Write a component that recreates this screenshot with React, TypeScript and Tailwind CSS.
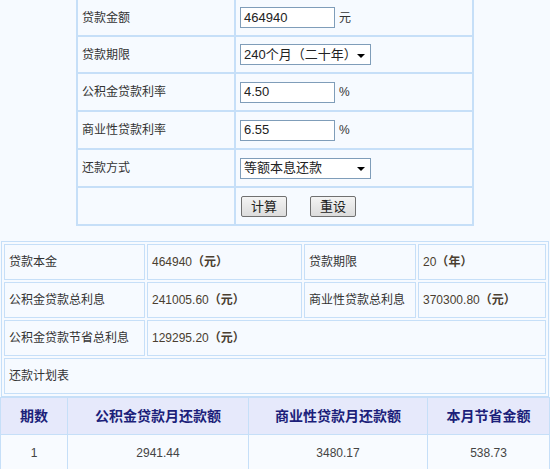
import { ReactNode } from "react";

const font = { fontFamily: '"Liberation Sans", "Noto Sans CJK SC", sans-serif' };

function Input({ value, unit }: { value: string; unit: string }) {
  return (
    <div className="flex items-center gap-[4px]">
      <div className="w-[95px] h-[21px] border border-[#7f9db9] bg-white flex items-center px-[3px] text-[13px] text-[#222]">
        {value}
      </div>
      <span className="text-[12px] text-[#333]">{unit}</span>
    </div>
  );
}

function Select({ value }: { value: string }) {
  return (
    <div className="w-[131px] h-[21px] border border-[#7f9db9] bg-white flex items-center justify-between pl-[3px] pr-[5px] text-[13px] text-[#222]">
      <span>{value}</span>
      <span className="w-0 h-0 border-l-[4px] border-r-[4px] border-t-[4px] border-l-transparent border-r-transparent border-t-black mt-[2px]" />
    </div>
  );
}

function Button({ children }: { children: ReactNode }) {
  return (
    <button className="w-[46px] h-[21px] border border-[#707070] rounded-[2px] bg-gradient-to-b from-[#f4f4f4] to-[#dcdcdc] text-[13px] text-[#222] leading-none">
      {children}
    </button>
  );
}

function FormRow({ label, h, children, first }: { label: string; h: string; children?: ReactNode; first?: boolean }) {
  const b = first ? "border-t-0" : "";
  return (
    <tr className={h}>
      <td className={`w-[158px] border-2 border-[#c6dff8] px-[4px] text-[12px] text-[#333] align-middle ${b}`}>{label}</td>
      <td className={`border-2 border-[#c6dff8] px-[4px] align-middle ${b}`}>{children}</td>
    </tr>
  );
}

function Cell({ children, span, w }: { children?: ReactNode; span?: number; w?: string }) {
  return (
    <td colSpan={span} className={`h-[36px] border border-[#c6dff8] px-[4px] text-[12px] text-[#333] align-middle ${w ?? ""}`}>
      {children}
    </td>
  );
}

function Val({ n, u }: { n: string; u: string }) {
  return (
    <span className="text-[#4a3e30]">
      {n}
      <span className="font-bold">（{u}）</span>
    </span>
  );
}

export default function App() {
  return (
    <div className="w-[550px] h-[469px] overflow-hidden bg-[#f6faff]" style={font}>
      <table className="mx-auto w-[398px] border-collapse">
        <tbody>
          <FormRow label="贷款金额" h="h-[36px]" first>
            <Input value="464940" unit="元" />
          </FormRow>
          <FormRow label="贷款期限" h="h-[37px]">
            <Select value="240个月（二十年）" />
          </FormRow>
          <FormRow label="公积金贷款利率" h="h-[38px]">
            <Input value="4.50" unit="%" />
          </FormRow>
          <FormRow label="商业性贷款利率" h="h-[38px]">
            <Input value="6.55" unit="%" />
          </FormRow>
          <FormRow label="还款方式" h="h-[38px]">
            <Select value="等额本息还款" />
          </FormRow>
          <FormRow label="" h="h-[38px]">
            <div className="flex gap-[23px] pl-[1px]">
              <Button>计算</Button>
              <Button>重设</Button>
            </div>
          </FormRow>
        </tbody>
      </table>

      <div className="mt-[15px] px-[1px]">
        <table className="w-full border border-[#c6dff8] border-separate border-spacing-[2px]">
          <tbody>
            <tr>
              <Cell w="w-[141px]">贷款本金</Cell>
              <Cell w="w-[155px]"><Val n="464940" u="元" /></Cell>
              <Cell w="w-[112px]">贷款期限</Cell>
              <Cell><Val n="20" u="年" /></Cell>
            </tr>
            <tr>
              <Cell>公积金贷款总利息</Cell>
              <Cell><Val n="241005.60" u="元" /></Cell>
              <Cell>商业性贷款总利息</Cell>
              <Cell><Val n="370300.80" u="元" /></Cell>
            </tr>
            <tr>
              <Cell>公积金贷款节省总利息</Cell>
              <Cell span={3}><Val n="129295.20" u="元" /></Cell>
            </tr>
            <tr>
              <Cell span={4}>还款计划表</Cell>
            </tr>
          </tbody>
        </table>
      </div>

      <table className="w-full border-collapse">
        <thead>
          <tr className="h-[37px] bg-[#e6e9fb]">
            <th className="w-[67px] border border-[#c6dff8] text-[14px] font-bold text-[#1c1f7a]">期数</th>
            <th className="w-[181px] border border-[#c6dff8] text-[14px] font-bold text-[#1c1f7a]">公积金贷款月还款额</th>
            <th className="w-[179px] border border-[#c6dff8] text-[14px] font-bold text-[#1c1f7a]">商业性贷款月还款额</th>
            <th className="border border-[#c6dff8] text-[14px] font-bold text-[#1c1f7a]">本月节省金额</th>
          </tr>
        </thead>
        <tbody>
          <tr className="h-[37px] bg-[#f8fbff]">
            <td className="border border-[#c6dff8] text-center text-[12px] text-[#444]">1</td>
            <td className="border border-[#c6dff8] text-center text-[12px] text-[#444]">2941.44</td>
            <td className="border border-[#c6dff8] text-center text-[12px] text-[#444]">3480.17</td>
            <td className="border border-[#c6dff8] text-center text-[12px] text-[#444]">538.73</td>
          </tr>
        </tbody>
      </table>
    </div>
  );
}
